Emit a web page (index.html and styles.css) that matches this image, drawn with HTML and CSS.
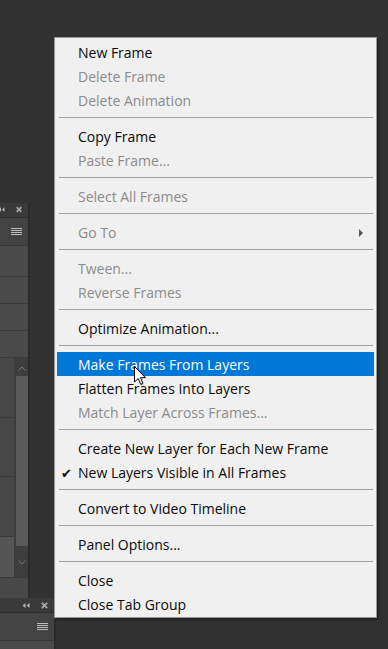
FILE: index.html
```html
<!DOCTYPE html>
<html lang="en">
<head>
  <meta charset="UTF-8" />
  <meta name="viewport" content="width=device-width, initial-scale=1" />
  <title>Timeline menu</title>
  <link rel="stylesheet" href="styles.css">
</head>
<body>
  <div class="dock">
    <div class="panel panel-top">
      <div class="panel-head">
        <svg class="collapse" width="8" height="5" viewBox="0 0 8 5"><path d="M3.5 0 L0.5 2.5 L3.5 5 Z M7.5 0 L4.5 2.5 L7.5 5 Z" fill="#b5b5b5"/></svg>
        <svg class="close-x" width="7" height="7" viewBox="0 0 7 7"><path d="M0.8 0.8 L6.2 6.2 M6.2 0.8 L0.8 6.2" stroke="#a8a8a8" stroke-width="1.8"/></svg>
      </div>
      <div class="panel-tools"><span class="burger"><i></i><i></i><i></i><i></i></span></div>
      <div class="row row-tall"></div>
      <div class="row"></div>
      <div class="row"></div>
      <div class="row"></div>
      <div class="list">
        <div class="list-items">
          <div class="item"></div>
          <div class="item"></div>
          <div class="item"></div>
          <div class="item item-sel"></div>
        </div>
        <div class="scroll">
          <svg class="arrow" width="8" height="5" viewBox="0 0 8 5"><path d="M0.5 4.5 L4 1 L7.5 4.5" fill="none" stroke="#777" stroke-width="1"/></svg>
          <div class="thumb"></div>
          <svg class="arrow" width="8" height="5" viewBox="0 0 8 5"><path d="M0.5 0.5 L4 4 L7.5 0.5" fill="none" stroke="#777" stroke-width="1"/></svg>
        </div>
      </div>
      <div class="row row-foot"></div>
    </div>
    <div class="panel panel-bottom">
      <div class="panel-head">
        <svg class="collapse" width="8" height="5" viewBox="0 0 8 5"><path d="M3.5 0 L0.5 2.5 L3.5 5 Z M7.5 0 L4.5 2.5 L7.5 5 Z" fill="#b5b5b5"/></svg>
        <svg class="close-x" width="7" height="7" viewBox="0 0 7 7"><path d="M0.8 0.8 L6.2 6.2 M6.2 0.8 L0.8 6.2" stroke="#a8a8a8" stroke-width="1.8"/></svg>
      </div>
      <div class="panel-tools"><span class="burger"><i></i><i></i><i></i><i></i></span></div>
      <div class="row"></div>
    </div>
  </div>

  <div class="menu">
    <div class="mi">New Frame</div>
    <div class="mi off">Delete Frame</div>
    <div class="mi off">Delete Animation</div>
    <div class="sep"></div>
    <div class="mi">Copy Frame</div>
    <div class="mi off">Paste Frame...</div>
    <div class="sep"></div>
    <div class="mi off">Select All Frames</div>
    <div class="sep"></div>
    <div class="mi off sub">Go To</div>
    <div class="sep"></div>
    <div class="mi off">Tween...</div>
    <div class="mi off">Reverse Frames</div>
    <div class="sep"></div>
    <div class="mi">Optimize Animation...</div>
    <div class="sep"></div>
    <div class="mi hover">Make Frames From Layers</div>
    <div class="mi">Flatten Frames Into Layers</div>
    <div class="mi off">Match Layer Across Frames...</div>
    <div class="sep"></div>
    <div class="mi">Create New Layer for Each New Frame</div>
    <div class="mi checked">New Layers Visible in All Frames</div>
    <div class="sep"></div>
    <div class="mi">Convert to Video Timeline</div>
    <div class="sep"></div>
    <div class="mi">Panel Options...</div>
    <div class="sep"></div>
    <div class="mi">Close</div>
    <div class="mi">Close Tab Group</div>
  </div>

  <svg class="cursor" width="13" height="20" viewBox="0 0 13 20">
    <path d="M0.5 0.5 L0.5 16 L4.2 12.5 L6.8 18.5 L9 17.5 L6.5 11.7 L11.5 11.7 Z" fill="#fff" stroke="#000" stroke-width="1" stroke-linejoin="miter"/>
  </svg>
</body>
</html>
```

FILE: styles.css
```css
html, body {
  margin: 0;
  height: 100%;
}
body {
  background: #323232;
  font-family: "Open Sans", "Noto Sans", sans-serif;
  position: relative;
  overflow: hidden;
}
.dock {
  display: flex;
  flex-direction: column;
  padding-top: 203px;
}
.panel {
  background: #474747;
  border-right: 2px solid #2b2b2b;
  box-sizing: border-box;
}
.panel-top {
  width: 30px;
  height: 395px;
  display: flex;
  flex-direction: column;
}
.panel-bottom {
  width: 56px;
}
.panel-head {
  height: 14px;
  background: #3a3a3a;
  display: flex;
  justify-content: flex-end;
  align-items: center;
  gap: 11px;
  padding-right: 6px;
  border-bottom: 1px solid #2e2e2e;
}
.panel-top .panel-head {
  justify-content: space-between;
  padding: 0 6px 0 0;
}
.panel-top .collapse {
  margin-left: -2px;
}
.panel-tools {
  height: 27px;
  background: #434343;
  display: flex;
  justify-content: flex-end;
  align-items: center;
  padding-right: 6px;
  border-bottom: 1px solid #3a3a3a;
}
.burger {
  display: flex;
  flex-direction: column;
  gap: 1px;
  width: 11px;
}
.burger i {
  display: block;
  height: 1px;
  background: #bdbdbd;
}
.row {
  height: 26px;
  border-bottom: 1px solid #3b3b3b;
  background: #4a4a4a;
}
.row-tall {
  height: 31px;
}
.row-foot {
  height: 20px;
  border-bottom: none;
  background: #484848;
}
.list {
  display: flex;
  height: 221px;
  border-bottom: 1px solid #3b3b3b;
}
.list-items {
  width: 14px;
  display: flex;
  flex-direction: column;
  border-right: 1px solid #3c3c3c;
}
.item {
  flex: 1;
  background: #474747;
  border-bottom: 1px solid #3a3a3a;
}
.item-sel {
  flex: 0 0 40px;
  background: #555;
  border-bottom: none;
}
.scroll {
  flex: 1;
  background: #3e3e3e;
  display: flex;
  flex-direction: column;
  align-items: center;
  padding: 8px 0 6px;
}
.scroll .thumb {
  width: 12px;
  flex: 0 0 170px;
  background: #5a5a5a;
  margin: 5px 0 14px;
}
.menu {
  position: absolute;
  left: 54px;
  top: 37px;
  width: 323px;
  box-sizing: border-box;
  background: #f0f0f0;
  border: 1px solid #979797;
  padding: 2px 2px 1px;
  box-shadow: 2px 2px 2px rgba(0, 0, 0, 0.35);
  font-size: 14px;
  color: #0a0a0a;
}
.mi {
  height: 23px;
  line-height: 24px;
  padding: 1px 0 0 21px;
  position: relative;
  white-space: nowrap;
}
.mi.off {
  color: #8b8b8b;
}
.mi.hover {
  background: #0078d7;
  color: #fff;
}
.mi.checked::before {
  content: "\2714";
  position: absolute;
  left: 4px;
  font-size: 13px;
  color: #111;
}
.mi.sub::after {
  content: "";
  position: absolute;
  right: 11px;
  top: 9px;
  border-left: 4px solid #555;
  border-top: 4px solid transparent;
  border-bottom: 4px solid transparent;
}
.sep {
  height: 1px;
  margin: 5px 1px 6px 2px;
  background: #a0a0a0;
}
.cursor {
  position: absolute;
  left: 134px;
  top: 366px;
}
```
